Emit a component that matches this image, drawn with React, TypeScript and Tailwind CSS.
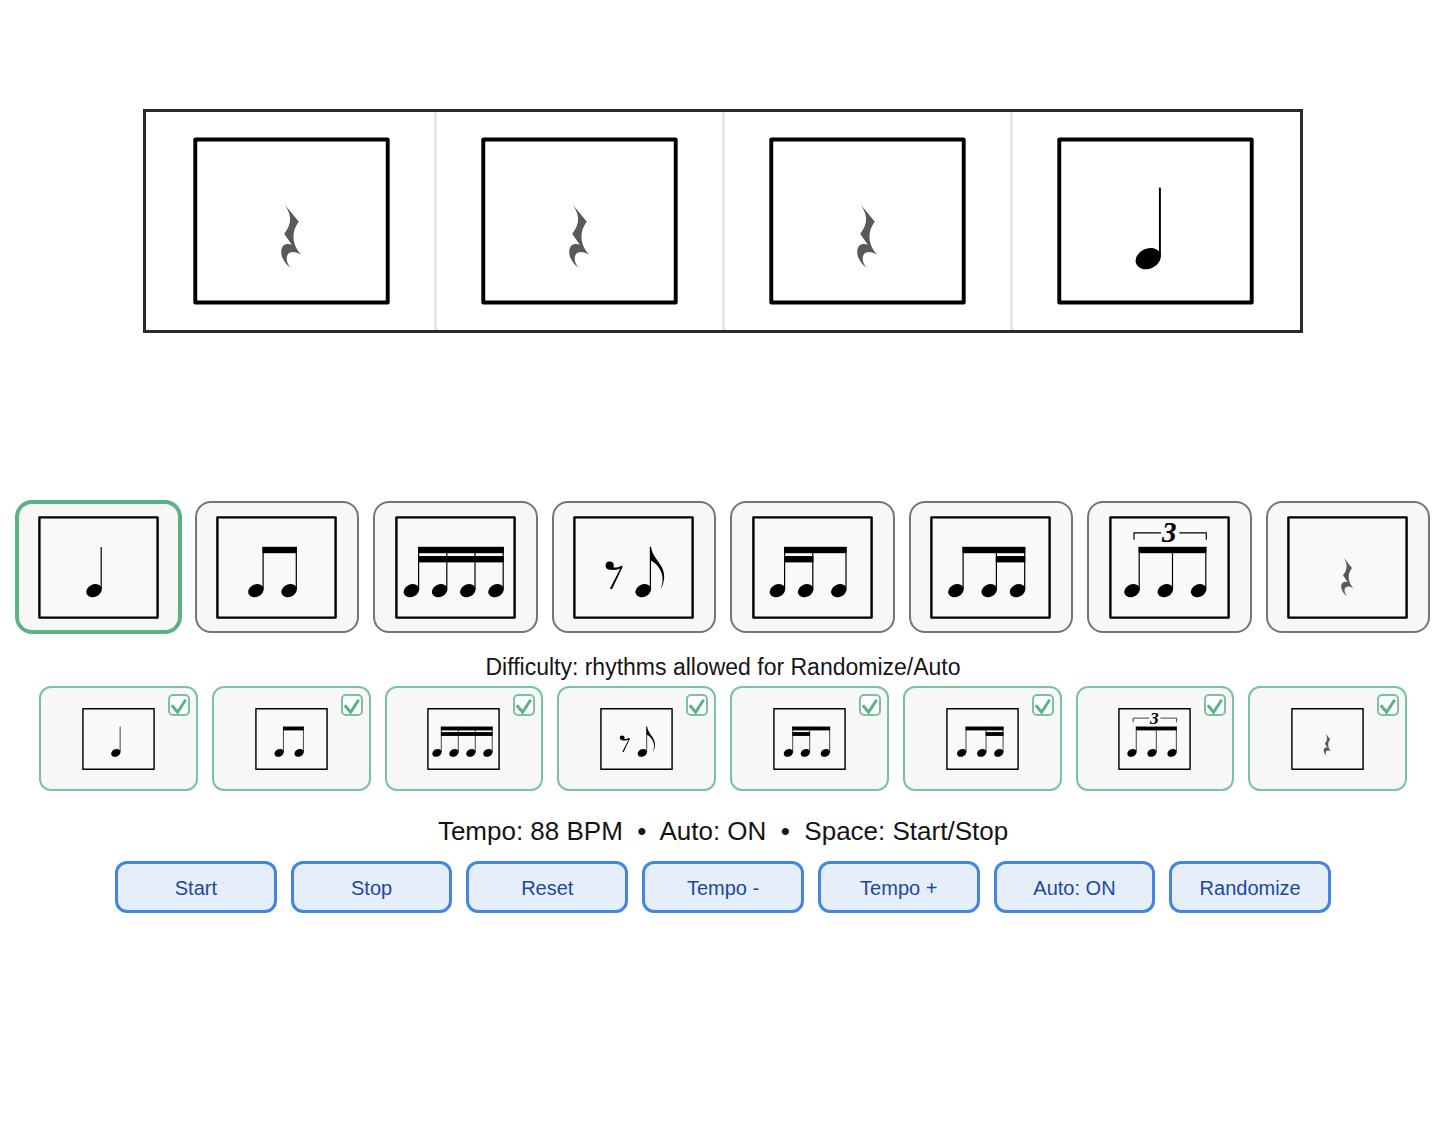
import { useEffect, useState } from 'react';
import clsx from 'clsx';

type RhythmId =
  | 'quarter'
  | 'eighths'
  | 'sixteenths'
  | 'restEighth'
  | 'sixteenthsEighth'
  | 'eighthSixteenths'
  | 'triplet'
  | 'rest';

interface Rhythm {
  id: RhythmId;
  name: string;
  heads: number[];
  // beams as [from stem, to stem, row]
  beams: [number, number, number][];
}

const RHYTHMS: Rhythm[] = [
  { id: 'quarter', name: 'Quarter note', heads: [56], beams: [] },
  { id: 'eighths', name: 'Two eighths', heads: [39.9, 73.1], beams: [[0, 1, 0]] },
  {
    id: 'sixteenths',
    name: 'Four sixteenths',
    heads: [16.4, 44.6, 72.8, 101],
    beams: [[0, 3, 0], [0, 3, 1]],
  },
  { id: 'restEighth', name: 'Eighth rest and eighth', heads: [70.2], beams: [] },
  {
    id: 'sixteenthsEighth',
    name: 'Two sixteenths and eighth',
    heads: [25.4, 53.6, 86.8],
    beams: [[0, 2, 0], [0, 1, 1]],
  },
  {
    id: 'eighthSixteenths',
    name: 'Eighth and two sixteenths',
    heads: [25.9, 59.2, 87.5],
    beams: [[0, 2, 0], [1, 2, 1]],
  },
  { id: 'triplet', name: 'Eighth triplet', heads: [23, 56.3, 89.6], beams: [[0, 2, 0]] },
  { id: 'rest', name: 'Quarter rest', heads: [], beams: [] },
];

const STEM_OFFSET = 7.2;

function RhythmGlyph({ id, className }: { id: RhythmId; className?: string }) {
  const rhythm = RHYTHMS.find((r) => r.id === id)!;
  const stems = rhythm.heads.map((x) => x + STEM_OFFSET);

  return (
    <svg viewBox="0 0 121 103" className={className} aria-hidden="true">
      <rect
        x="1.4"
        y="1.4"
        width="118.2"
        height="100.2"
        fill="white"
        fillOpacity="0.25"
        stroke="black"
        strokeWidth="2.4"
        strokeLinejoin="round"
      />
      {rhythm.heads.map((x, i) => (
        <g key={x}>
          <ellipse cx={x} cy="74.6" rx="8" ry="6.2" transform={`rotate(-25 ${x} 74.6)`} />
          <line x1={stems[i]} y1="31" x2={stems[i]} y2="73.5" stroke="black" strokeWidth="1.2" />
        </g>
      ))}
      {rhythm.beams.map(([from, to, row]) => (
        <rect
          key={row}
          x={stems[from] - 0.6}
          y={30.8 + row * 9.2}
          width={stems[to] - stems[from] + 1.2}
          height="6.4"
        />
      ))}
      {id === 'restEighth' && (
        <>
          <circle cx="36.7" cy="49.6" r="4.1" />
          <path d="M36.8 53.6C41 54.6 45 53.5 47.2 52.6L37 72.6L38.9 73.5L49.8 50.5L48.8 49.7C45.5 51.2 42 52 39.6 51.4Z" />
          <path d="M76.9 30.8H78C78.6 35.5 80.8 39.5 84.2 44.3C88.2 49.6 91.2 54.4 91.2 60.5C91.2 65 89.9 69.3 87.8 72.9C89 68.8 89.9 65 89.5 61C88.5 53.5 83.7 47 77.6 44.4Z" />
        </>
      )}
      {id === 'triplet' && (
        <>
          <path d="M25 23.8V16.8H52M70.3 16.8H97.3V23.8" fill="none" stroke="black" strokeWidth="1.2" />
          <text
            x="60.2"
            y="26.4"
            textAnchor="middle"
            fontFamily="'Liberation Serif', serif"
            fontSize="29"
            fontWeight="bold"
            fontStyle="italic"
          >
            3
          </text>
        </>
      )}
      {id === 'rest' && (
        <path
          fill="#595959"
          d="M56.4 41.5L65 52C60.5 57.5 60.3 65.5 66.4 72.3C62 69.4 58 70.4 57.6 73.8C57.3 76 58.3 78.3 59.8 80.1C56 77.3 53.5 72.6 54.3 69C55.2 65.3 58.5 65.4 60.6 66L56 59.3C60.6 53.5 61 48.5 56.4 41.5Z"
        />
      )}
    </svg>
  );
}

function ControlButton({ label, onClick }: { label: string; onClick: () => void }) {
  return (
    <button
      type="button"
      onClick={onClick}
      className="h-13 flex-1 rounded-xl border-3 border-[#4286e0] bg-[#e5eef9] pt-0.5 text-xl text-[#20489f]"
    >
      {label}
    </button>
  );
}

export default function App() {
  const [pattern, setPattern] = useState<RhythmId[]>(['rest', 'rest', 'rest', 'quarter']);
  const [selected, setSelected] = useState<RhythmId>('quarter');
  const [allowed, setAllowed] = useState<RhythmId[]>(RHYTHMS.map((r) => r.id));
  const [tempo, setTempo] = useState(88);
  const [auto, setAuto] = useState(true);
  const [playing, setPlaying] = useState(false);
  const [beat, setBeat] = useState(0);

  const randomize = () => {
    if (allowed.length === 0) return;
    setPattern((prev) => prev.map(() => allowed[Math.floor(Math.random() * allowed.length)]));
  };

  useEffect(() => {
    if (!playing) return;
    const timer = setInterval(() => setBeat((b) => b + 1), 60000 / tempo);
    return () => clearInterval(timer);
  }, [playing, tempo]);

  // New pattern at the start of every bar while auto is on
  useEffect(() => {
    if (playing && auto && beat > 0 && beat % 4 === 0) randomize();
  }, [beat]);

  useEffect(() => {
    const onKeyDown = (e: KeyboardEvent) => {
      if (e.code !== 'Space') return;
      e.preventDefault();
      setPlaying((p) => !p);
    };
    window.addEventListener('keydown', onKeyDown);
    return () => window.removeEventListener('keydown', onKeyDown);
  }, []);

  const toggleAllowed = (id: RhythmId) => {
    setAllowed((prev) => (prev.includes(id) ? prev.filter((r) => r !== id) : [...prev, id]));
  };

  const placeRhythm = (index: number) => {
    setPattern((prev) => prev.map((r, i) => (i === index ? selected : r)));
  };

  const reset = () => {
    setPlaying(false);
    setBeat(0);
    setPattern(['quarter', 'quarter', 'quarter', 'quarter']);
  };

  return (
    <main className="min-h-screen bg-white pt-[109px] pr-1 font-['Liberation_Sans',Arial,sans-serif] text-[#151515]">
      {/* Current bar */}
      <section className="mx-auto grid w-full max-w-[1160px] grid-cols-4 border-3 border-[#2a2a2a] pr-0.5">
        {pattern.map((id, i) => (
          <button
            key={i}
            type="button"
            aria-label={`Beat ${i + 1}`}
            onClick={() => placeRhythm(i)}
            className={clsx(
              'flex justify-center border-l-3 py-[25px]',
              i === 0 ? 'border-transparent' : 'border-[#e6e6e6]',
              playing && beat % 4 === i && 'bg-[#e5eef9]'
            )}
          >
            <RhythmGlyph id={id} className="h-[168px] w-[197px]" />
          </button>
        ))}
      </section>

      {/* Palette */}
      <section className="mt-[168px] grid grid-cols-8 gap-3.5 px-4">
        {RHYTHMS.map((r) => (
          <button
            key={r.id}
            type="button"
            aria-label={r.name}
            aria-pressed={selected === r.id}
            onClick={() => setSelected(r.id)}
            className={clsx(
              'flex h-[132px] items-center justify-center rounded-2xl bg-[#f7f7f7]',
              selected === r.id
                ? 'border-3 border-[#5ab285] ring-1 ring-[#5ab285]'
                : 'border-2 border-[#757575]'
            )}
          >
            <RhythmGlyph id={r.id} className="h-[103px] w-[121px]" />
          </button>
        ))}
      </section>

      {/* Difficulty */}
      <section>
        <h2 className="mt-[18px] mb-[3px] text-center text-[23px] leading-8">
          Difficulty: rhythms allowed for Randomize/Auto
        </h2>
        <div className="grid grid-cols-8 gap-3.5 px-[39px]">
          {RHYTHMS.map((r) => (
            <label
              key={r.id}
              className="relative flex h-[105px] items-center justify-center rounded-xl border-2 border-[#7cc29f] bg-[#f7f7f7]"
            >
              <RhythmGlyph id={r.id} className="h-[62px] w-[73px]" />
              <span className="absolute top-1.5 right-1.5 size-[22px]">
                <input
                  type="checkbox"
                  aria-label={r.name}
                  checked={allowed.includes(r.id)}
                  onChange={() => toggleAllowed(r.id)}
                  className="peer block size-full appearance-none rounded-[5px] border-2 border-[#7cc29f] bg-white"
                />
                <svg
                  viewBox="0 0 22 22"
                  className="pointer-events-none invisible absolute inset-0 peer-checked:visible"
                  aria-hidden="true"
                >
                  <path d="M3.8 11.2L9.6 18.2L17.7 5.8" fill="none" stroke="#5ab285" strokeWidth="3" />
                </svg>
              </span>
            </label>
          ))}
        </div>
      </section>

      {/* Status and controls */}
      <p className="mt-6 text-center text-[26px] leading-8 whitespace-pre">
        {`Tempo: ${tempo} BPM  •  Auto: ${auto ? 'ON' : 'OFF'}  •  Space: Start/Stop`}
      </p>
      <div className="mx-auto mt-3.5 flex w-full max-w-[1216px] gap-3.5">
        <ControlButton label="Start" onClick={() => setPlaying(true)} />
        <ControlButton label="Stop" onClick={() => setPlaying(false)} />
        <ControlButton label="Reset" onClick={reset} />
        <ControlButton label="Tempo -" onClick={() => setTempo((t) => Math.max(40, t - 4))} />
        <ControlButton label="Tempo +" onClick={() => setTempo((t) => Math.min(220, t + 4))} />
        <ControlButton label={`Auto: ${auto ? 'ON' : 'OFF'}`} onClick={() => setAuto((a) => !a)} />
        <ControlButton label="Randomize" onClick={randomize} />
      </div>
    </main>
  );
}
